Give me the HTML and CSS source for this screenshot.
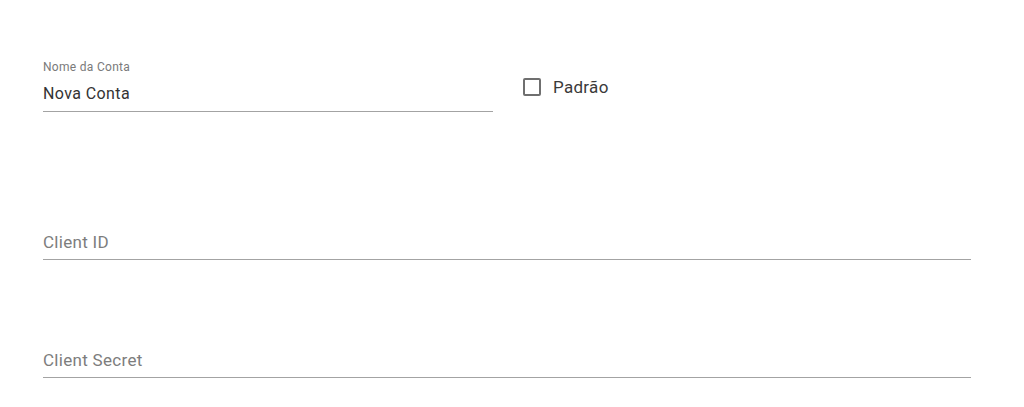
FILE: index.html
```html
<!DOCTYPE html>
<html lang="pt">
<head>
<meta charset="utf-8">
<title>Conta</title>
<link rel="stylesheet" href="styles.css">
</head>
<body>
<form class="form">
  <div class="row">
    <div class="field field-name">
      <div class="float-label">Nome da Conta</div>
      <div class="input value">Nova Conta</div>
    </div>
    <label class="check">
      <span class="box"></span>
      <span class="check-text">Padrão</span>
    </label>
  </div>
  <div class="field field-wide field-id">
    <div class="input placeholder">Client ID</div>
  </div>
  <div class="field field-wide field-secret">
    <div class="input placeholder">Client Secret</div>
  </div>
</form>
</body>
</html>
```

FILE: styles.css
```css
html, body {
  margin: 0;
  padding: 0;
  background: #ffffff;
  font-family: Roboto, "Liberation Sans", Arial, sans-serif;
}

.form {
  display: flex;
  flex-direction: column;
  padding: 61px 0 0 43px;
  width: 928px;
}

.row {
  display: flex;
  align-items: flex-start;
  gap: 30px;
}

.field {
  display: flex;
  flex-direction: column;
}

.field-name {
  width: 450px;
}

.float-label {
  font-size: 12px;
  line-height: 13px;
  letter-spacing: 0.3px;
  color: #7a7a7a;
  margin-bottom: 10px;
}

.input {
  font-size: 16px;
  line-height: 19px;
  letter-spacing: 0.4px;
  padding-bottom: 8px;
  border-bottom: 1px solid #a3a3a3;
}

.value {
  color: #333333;
}

.placeholder {
  font-size: 17px;
  line-height: 20px;
  letter-spacing: 0.3px;
  padding-bottom: 7px;
  color: #7d7d7d;
}

.field-wide {
  width: 928px;
}

.field-id {
  margin-top: 120px;
}

.field-secret {
  margin-top: 90px;
}

.check {
  display: flex;
  align-items: center;
  gap: 12px;
  margin-top: 17px;
  cursor: pointer;
}

.box {
  width: 14px;
  height: 14px;
  border: 2px solid #6f6f6f;
  border-radius: 2px;
}

.check-text {
  font-size: 17px;
  line-height: 18px;
  letter-spacing: 0.3px;
  color: #3a3a3a;
}
```
